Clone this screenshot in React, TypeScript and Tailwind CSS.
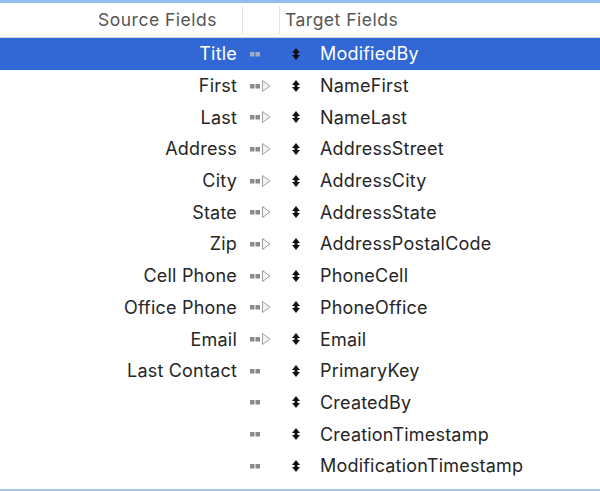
import React from "react";

const rows: { src: string; tgt: string; arrow: boolean }[] = [
  { src: "Title", tgt: "ModifiedBy", arrow: false },
  { src: "First", tgt: "NameFirst", arrow: true },
  { src: "Last", tgt: "NameLast", arrow: true },
  { src: "Address", tgt: "AddressStreet", arrow: true },
  { src: "City", tgt: "AddressCity", arrow: true },
  { src: "State", tgt: "AddressState", arrow: true },
  { src: "Zip", tgt: "AddressPostalCode", arrow: true },
  { src: "Cell Phone", tgt: "PhoneCell", arrow: true },
  { src: "Office Phone", tgt: "PhoneOffice", arrow: true },
  { src: "Email", tgt: "Email", arrow: true },
  { src: "Last Contact", tgt: "PrimaryKey", arrow: false },
  { src: "", tgt: "CreatedBy", arrow: false },
  { src: "", tgt: "CreationTimestamp", arrow: false },
  { src: "", tgt: "ModificationTimestamp", arrow: false },
];

function Connector({ arrow, selected }: { arrow: boolean; selected: boolean }) {
  const c = selected ? "#a0aac4" : "#8a8a8a";
  return (
    <svg width="26" height="14" viewBox="0 0 26 14">
      <rect x="1" y="5" width="4.5" height="4.5" fill={c} />
      <rect x="6.5" y="5" width="4.5" height="4.5" fill={c} />
      {arrow && (
        <path d="M13.5 1.5 L21 7 L13.5 12.5 Z" fill="#f2f2f2" stroke="#a0a0a0" strokeWidth="1" />
      )}
    </svg>
  );
}

function UpDown() {
  return (
    <svg width="8" height="12" viewBox="0 0 8 12">
      <path d="M4 0 L8 5 L0 5 Z" fill="#111" />
      <rect x="2.5" y="4" width="3" height="4" fill="#111" />
      <path d="M4 12 L8 7 L0 7 Z" fill="#111" />
    </svg>
  );
}

export default function App() {
  return (
    <div
      className="w-[600px] h-[491px] bg-white flex flex-col overflow-hidden"
      style={{ fontFamily: "Inter, 'Liberation Sans', sans-serif" }}
    >
      <div className="h-[3px] bg-[#93bdec]" />
      <div className="h-[35px] flex items-center border-b border-[#d8d8d8] text-[17.5px] text-[#555] tracking-[0.5px]">
        <div className="w-[243px] h-[28px] flex items-center justify-end pr-[25px] border-r border-[#e4e4e4]">
          Source Fields
        </div>
        <div className="w-[37px] h-[28px] border-r border-[#e4e4e4]" />
        <div className="pl-[5px]">Target Fields</div>
      </div>
      <div className="flex flex-col">
        {rows.map((r, i) => {
          const sel = i === 0;
          return (
            <div
              key={i}
              className={`h-[31.7px] flex items-center text-[18px] tracking-[0.2px] ${
                sel ? "bg-[#3168d5] text-white" : "text-[#262626]"
              }`}
            >
              <div className="w-[237px] text-right">{r.src}</div>
              <div className="w-[48px] flex justify-start pl-[12px]">
                <Connector arrow={r.arrow} selected={sel} />
              </div>
              <div className="w-[35px] flex justify-start pl-[7px]">
                <UpDown />
              </div>
              <div>{r.tgt}</div>
            </div>
          );
        })}
      </div>
      <div className="flex-1" />
      <div className="h-[2px] bg-[#a9c8e2]" />
    </div>
  );
}
